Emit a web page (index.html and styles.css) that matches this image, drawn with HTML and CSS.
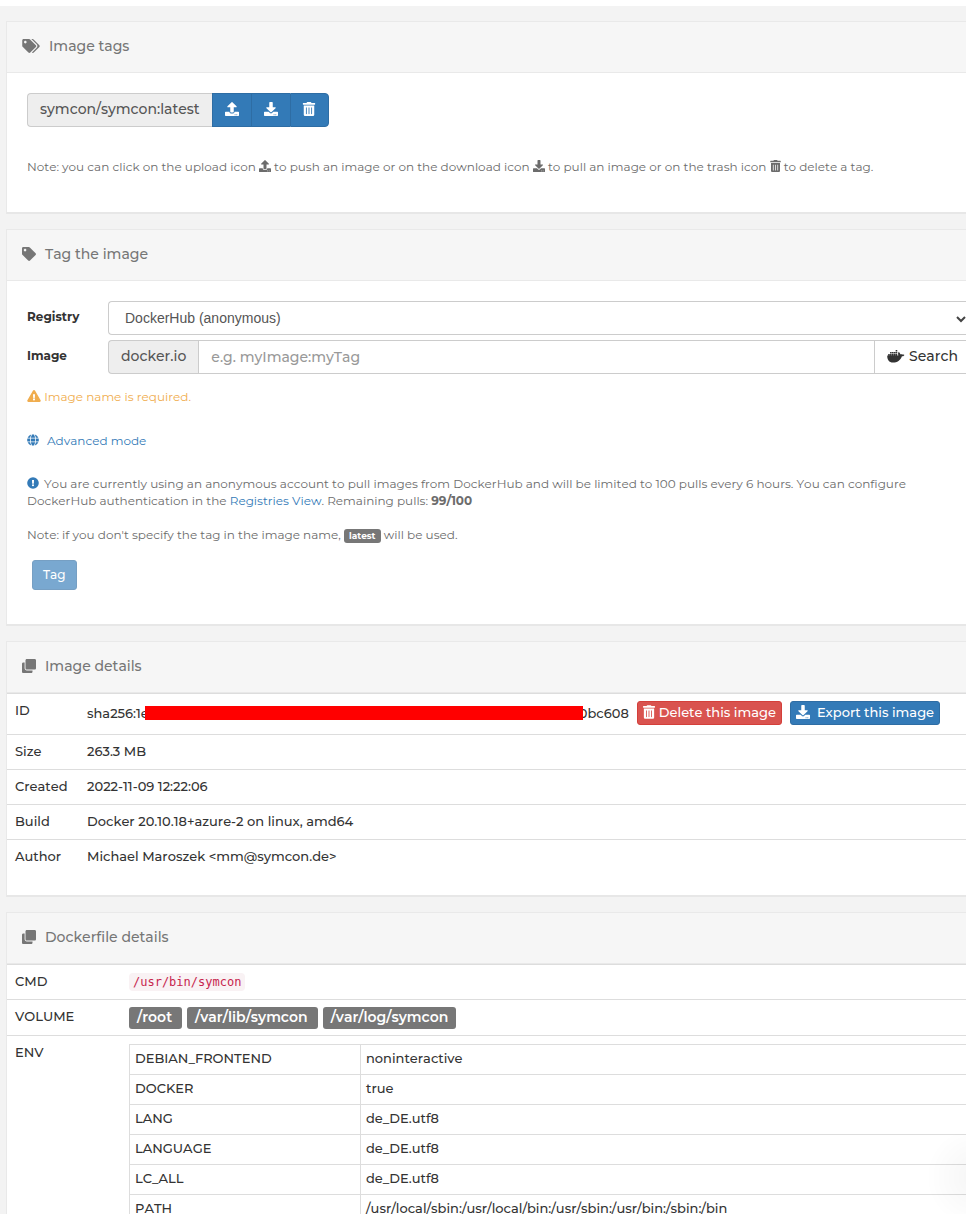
FILE: index.html
```
<!DOCTYPE html>
<html lang="en">
<head>
<meta charset="utf-8">
<meta name="viewport" content="width=device-width, initial-scale=1">
<title>Image details</title>
<link rel="stylesheet" href="styles.css">
</head>
<body>
<svg class="sprite" aria-hidden="true">
  <symbol id="tag" viewBox="0 0 512 512"><path d="M0 252.118V48C0 21.49 21.49 0 48 0h204.118a48 48 0 0 1 33.941 14.059l211.882 211.882c18.745 18.745 18.745 49.137 0 67.882L293.823 497.941c-18.745 18.745-49.137 18.745-67.882 0L14.059 286.059A48 48 0 0 1 0 252.118zM112 64c-26.51 0-48 21.49-48 48s21.49 48 48 48 48-21.49 48-48-21.49-48-48-48z"/></symbol>
  <symbol id="tags" viewBox="0 0 640 512"><path d="M497.941 225.941L286.059 14.059A48 48 0 0 0 252.118 0H48C21.49 0 0 21.49 0 48v204.118a48 48 0 0 0 14.059 33.941l211.882 211.882c18.744 18.745 49.136 18.746 67.882 0l204.118-204.118c18.745-18.745 18.745-49.137 0-67.882zM112 160c-26.51 0-48-21.49-48-48s21.49-48 48-48 48 21.49 48 48-21.49 48-48 48zm513.941 133.823L421.823 497.941c-18.745 18.745-49.137 18.745-67.882 0l-.36-.36L527.64 323.522c16.999-16.999 26.36-39.6 26.36-63.64s-9.362-46.641-26.36-63.64L331.397 0h48.721a48 48 0 0 1 33.941 14.059l211.882 211.882c18.745 18.745 18.745 49.137 0 67.882z"/></symbol>
  <symbol id="upload" viewBox="0 0 512 512"><path d="M296 384h-80c-13.3 0-24-10.7-24-24V192h-87.7c-17.8 0-26.7-21.5-14.1-34.1L242.3 5.7c7.5-7.5 19.8-7.5 27.3 0l152.2 152.2c12.6 12.6 3.7 34.1-14.1 34.1H320v168c0 13.3-10.7 24-24 24zm216-8v112c0 13.3-10.7 24-24 24H24c-13.3 0-24-10.7-24-24V376c0-13.3 10.7-24 24-24h136v8c0 30.9 25.1 56 56 56h80c30.9 0 56-25.1 56-56v-8h136c13.3 0 24 10.7 24 24zm-124 88c0-11-9-20-20-20s-20 9-20 20 9 20 20 20 20-9 20-20zm64 0c0-11-9-20-20-20s-20 9-20 20 9 20 20 20 20-9 20-20z"/></symbol>
  <symbol id="download" viewBox="0 0 512 512"><path d="M216 0h80c13.3 0 24 10.7 24 24v168h87.7c17.8 0 26.7 21.5 14.1 34.1L269.7 378.3c-7.5 7.5-19.8 7.5-27.3 0L90.1 226.1c-12.6-12.6-3.7-34.1 14.1-34.1H192V24c0-13.3 10.7-24 24-24zm296 376v112c0 13.3-10.7 24-24 24H24c-13.3 0-24-10.7-24-24V376c0-13.3 10.7-24 24-24h146.7l49 49c20.1 20.1 52.5 20.1 72.6 0l49-49H488c13.3 0 24 10.7 24 24zm-124 88c0-11-9-20-20-20s-20 9-20 20 9 20 20 20 20-9 20-20zm64 0c0-11-9-20-20-20s-20 9-20 20 9 20 20 20 20-9 20-20z"/></symbol>
  <symbol id="trash" viewBox="0 0 448 512"><path d="M32 464a48 48 0 0 0 48 48h288a48 48 0 0 0 48-48V128H32zm272-256a16 16 0 0 1 32 0v224a16 16 0 0 1-32 0zm-96 0a16 16 0 0 1 32 0v224a16 16 0 0 1-32 0zm-96 0a16 16 0 0 1 32 0v224a16 16 0 0 1-32 0zM432 32H312l-9.4-18.7A24 24 0 0 0 281.1 0H166.8a23.72 23.72 0 0 0-21.4 13.3L136 32H16A16 16 0 0 0 0 48v32a16 16 0 0 0 16 16h416a16 16 0 0 0 16-16V48a16 16 0 0 0-16-16z"/></symbol>
  <symbol id="clone" viewBox="0 0 512 512"><path d="M464 0c26.51 0 48 21.49 48 48v288c0 26.51-21.49 48-48 48H176c-26.51 0-48-21.49-48-48V48c0-26.51 21.49-48 48-48h288M176 416c-44.112 0-80-35.888-80-80V128H48c-26.51 0-48 21.49-48 48v288c0 26.51 21.49 48 48 48h288c26.51 0 48-21.49 48-48v-48H176z"/></symbol>
  <symbol id="warning" viewBox="0 0 576 512"><path fill-rule="evenodd" d="M569.5 440c18.5 32-4.700 72-41.600 72H48c-36.900 0-60-40-41.600-72L246.400 24c18.500-32 64.700-32 83.200 0zM288 354a46 46 0 1 0 0 92 46 46 0 0 0 0-92zm-43.700-165.300 7.400 136c.4 6.400 5.600 11.300 12 11.300h48.500c6.400 0 11.600-5 12-11.300l7.400-136c.4-6.900-5.100-12.700-12-12.700h-63.400c-6.900 0-12.400 5.800-11.900 12.700z"/></symbol>
  <symbol id="alert" viewBox="0 0 512 512"><path fill-rule="evenodd" d="M504 256a248 248 0 1 1-496 0 248 248 0 0 1 496 0zm-248 50a46 46 0 1 0 0 92 46 46 0 0 0 0-92zm-43.700-165.300 7.400 136c.4 6.400 5.600 11.300 12 11.300h48.500c6.400 0 11.600-5 12-11.300l7.400-136c.4-6.900-5.100-12.700-12-12.700h-63.400c-6.800 0-12.300 5.800-11.900 12.700z"/></symbol>
  <symbol id="globe" viewBox="0 0 496 512"><path d="M336.500 160C322 70.700 287.800 8 248 8s-74 62.700-88.500 152h177zM152 256c0 22.200 1.200 43.500 3.300 64h185.300c2.100-20.500 3.300-41.800 3.300-64s-1.200-43.500-3.300-64H155.300c-2.100 20.500-3.300 41.800-3.300 64zm324.700-96c-28.600-67.900-86.500-120.400-158-141.600 24.400 33.800 41.200 84.700 50 141.600h108zM177.200 18.400C105.800 39.600 47.800 92.100 19.300 160h108c8.700-56.900 25.500-107.800 49.900-141.600zM487.400 192H372.700c2.100 21 3.300 42.500 3.300 64s-1.200 43-3.300 64h114.600c5.500-20.500 8.600-41.800 8.600-64s-3.100-43.500-8.500-64zM120 256c0-21.500 1.200-43 3.300-64H8.600C3.200 212.500 0 233.800 0 256s3.200 43.500 8.600 64h114.600c-2-21-3.200-42.500-3.200-64zm39.500 96c14.500 89.300 48.700 152 88.500 152s74-62.700 88.500-152h-177zm159.300 141.600c71.400-21.200 129.400-73.700 158-141.600h-108c-8.800 56.900-25.600 107.800-50 141.600zM19.300 352c28.600 67.900 86.500 120.400 158 141.600-24.400-33.800-41.200-84.700-50-141.600h-108z"/></symbol>
  <symbol id="docker" viewBox="0 0 640 512"><path d="M350 33h66v60h-66zM117 179h66v60h-66zm78 0h66v60h-66zm78 0h66v60h-66zm77 0h66v60h-66zM39 179h66v60H39zm156-73h66v60h-66zm78 0h66v60h-66zm77 0h66v60h-66zM117 106h66v60h-66zM632 202c-19-12-59-17-89-11-4-28-20-53-49-75l-16-11-11 16c-21 33-23 78-4 108-10 6-30 13-56 13H2c-10 57 7 131 50 182 42 49 105 74 187 74 178 0 310-82 371-231 24 0 76 0 103-51-10-8-62-13-81-14z" transform="scale(.88 1)"/></symbol>
</svg>

<main class="page">
  <section class="widget">
    <h2 class="widget-header"><svg class="icon icon-tags"><use href="#tags"/></svg>Image tags</h2>
    <div class="widget-body">
      <div class="group tag-group">
        <span class="addon">symcon/symcon:latest</span>
        <button class="group-btn" type="button" aria-label="Push tag"><svg class="icon icon-lg"><use href="#upload"/></svg></button>
        <button class="group-btn" type="button" aria-label="Pull tag"><svg class="icon icon-lg"><use href="#download"/></svg></button>
        <button class="group-btn" type="button" aria-label="Delete tag"><svg class="icon icon-lg"><use href="#trash"/></svg></button>
      </div>
      <p class="note">Note: you can click on the upload icon <svg class="icon"><use href="#upload"/></svg> to push an image or on the download icon <svg class="icon"><use href="#download"/></svg> to pull an image or on the trash icon <svg class="icon icon-narrow"><use href="#trash"/></svg> to delete a tag.</p>
    </div>
  </section>

  <section class="widget">
    <h2 class="widget-header"><svg class="icon icon-lg"><use href="#tag"/></svg>Tag the image</h2>
    <form class="widget-body form-body">
      <div class="form-row">
        <label for="registry">Registry</label>
        <div class="select-wrap">
          <select id="registry" class="registry"><option>DockerHub (anonymous)</option></select>
          <svg class="chevron" viewBox="0 0 10 8" aria-hidden="true"><path d="M1 2l4 4 4-4"/></svg>
        </div>
      </div>
      <div class="form-row">
        <label for="image">Image</label>
        <div class="group">
          <span class="addon">docker.io</span>
          <input id="image" class="image-input" type="text" placeholder="e.g. myImage:myTag">
          <button class="search" type="button"><svg class="icon icon-docker"><use href="#docker"/></svg>Search</button>
        </div>
      </div>
      <p class="note warning"><svg class="icon icon-warning"><use href="#warning"/></svg> Image name is required.</p>
      <p class="note advanced"><a href="#advanced"><svg class="icon spaced"><use href="#globe"/></svg>Advanced mode</a></p>
      <p class="note"><svg class="icon info"><use href="#alert"/></svg>You are currently using an anonymous account to pull images from DockerHub and will be limited to 100 pulls every 6 hours. You can configure DockerHub authentication in the <a href="#registries">Registries View</a>. Remaining pulls: <b>99/100</b></p>
      <p class="note">Note: if you don't specify the tag in the image name, <span class="label">latest</span> will be used.</p>
      <button class="btn btn-tag" type="submit" disabled>Tag</button>
    </form>
  </section>

  <section class="widget">
    <h2 class="widget-header"><svg class="icon icon-lg"><use href="#clone"/></svg>Image details</h2>
    <table class="details image-details">
      <tbody>
        <tr><th scope="row">ID</th><td>
          <div class="id-line"><span>sha256:1e</span><span class="redacted"></span><span>0bc608</span>
            <button class="btn btn-xs btn-danger" type="button"><svg class="icon icon-trash"><use href="#trash"/></svg>Delete this image</button>
            <button class="btn btn-xs btn-primary" type="button"><svg class="icon icon-lg"><use href="#download"/></svg>Export this image</button>
          </div></td></tr>
        <tr><th scope="row">Size</th><td>263.3 MB</td></tr>
        <tr><th scope="row">Created</th><td>2022-11-09 12:22:06</td></tr>
        <tr><th scope="row">Build</th><td>Docker 20.10.18+azure-2 on linux, amd64</td></tr>
        <tr><th scope="row">Author</th><td>Michael Maroszek &lt;mm@symcon.de&gt;</td></tr>
      </tbody>
    </table>
  </section>

  <section class="widget">
    <h2 class="widget-header"><svg class="icon icon-lg"><use href="#clone"/></svg>Dockerfile details</h2>
    <table class="details dockerfile">
      <tbody>
        <tr><th scope="row">CMD</th><td><code>/usr/bin/symcon</code></td></tr>
        <tr><th scope="row">VOLUME</th><td><div class="volumes"><span>/root</span><span>/var/lib/symcon</span><span>/var/log/symcon</span></div></td></tr>
        <tr><th scope="row">ENV</th><td class="env-cell">
          <table class="env">
            <tbody>
              <tr><td>DEBIAN_FRONTEND</td><td>noninteractive</td></tr>
              <tr><td>DOCKER</td><td>true</td></tr>
              <tr><td>LANG</td><td>de_DE.utf8</td></tr>
              <tr><td>LANGUAGE</td><td>de_DE.utf8</td></tr>
              <tr><td>LC_ALL</td><td>de_DE.utf8</td></tr>
              <tr><td>PATH</td><td>/usr/local/sbin:/usr/local/bin:/usr/sbin:/usr/bin:/sbin:/bin</td></tr>
            </tbody>
          </table></td></tr>
      </tbody>
    </table>
  </section>
</main>
<div class="corner-glow"></div>
</body>
</html>
```
FILE: styles.css
```
* { box-sizing: border-box; }
html { overflow: hidden; }
body {
  margin: 0;
  height: 100vh;
  overflow: hidden;
  background: #f3f3f3;
  border-top: 6px solid #fff;
  color: #333;
  font: 400 13px/18px Montserrat, Inter, sans-serif;
  font-kerning: none;
}
button, input { font-kerning: none; }
.sprite { display: none; }
.page {
  display: flex;
  flex-direction: column;
  gap: 15px;
  padding: 15px 0 0 6px;
}
.widget {
  background: #fff;
  border: 1px solid #e9e9e9;
  border-right: 0;
  border-bottom: 2px solid #e7e7e7;
}
.widget-header {
  display: flex;
  align-items: center;
  gap: 9px;
  height: 51px;
  margin: 0;
  padding: 0 15px 2px;
  background: #f6f6f6;
  border-bottom: 1px solid #e9e9e9;
  color: #767676;
  font-size: 14px;
  font-weight: 500;
}
.icon {
  width: 12px;
  height: 12px;
  fill: currentColor;
  vertical-align: -1px;
}
.icon-lg { width: 14px; height: 14px; }
.icon-tags { width: 18px; height: 14px; }
.icon-narrow { width: 11px; }
.icon-trash { width: 12px; height: 14px; }
.icon-warning { width: 14px; }
.icon-docker { width: 18px; height: 14px; }

.widget-body { padding: 20px; }
.group { display: flex; height: 34px; }
.tag-group { margin-bottom: 31px; }
.addon {
  display: flex;
  align-items: center;
  padding: 0 12px 2px;
  background: #eee;
  border: 1px solid #ccc;
  border-right: 0;
  border-radius: 4px 0 0 4px;
  color: #555;
  font-size: 14px;
  font-weight: 500;
}
.group-btn {
  display: flex;
  align-items: center;
  justify-content: center;
  width: 39px;
  padding: 0 0 2px;
  background: #337ab7;
  border: 1px solid #2e6da4;
  border-right: 0;
  color: #fff;
}
.group-btn:last-child { border-right: 1px solid #2e6da4; border-radius: 0 4px 4px 0; }
.note {
  margin: 0 0 17px;
  color: #6c6c6c;
  font-size: 12px;
  line-height: 17px;
}
a { color: #337ab7; text-decoration: none; }

.form-body { padding-right: 0; padding-bottom: 34px; }
.form-row {
  display: grid;
  grid-template-columns: 81px 1fr;
  margin-bottom: 5px;
}
.form-row label { padding-top: 7px; font-size: 12px; font-weight: 700; }
.select-wrap { position: relative; }
.registry {
  width: 100%;
  height: 34px;
  padding: 0 16px;
  appearance: none;
  background: #fff;
  border: 1px solid #ccc;
  border-right: 0;
  border-radius: 4px 0 0 4px;
  color: #555;
  font: 14px "Liberation Sans", sans-serif;
}
.chevron {
  position: absolute;
  top: 14px;
  right: 0;
  width: 10px;
  height: 8px;
  fill: none;
  stroke: #444;
  stroke-width: 2;
}
.image-input {
  flex: 1;
  min-width: 0;
  padding: 0 12px;
  border: 1px solid #ccc;
  border-right: 0;
  background: #fff;
  font-family: Montserrat, Inter, sans-serif;
  font-size: 14px;
  font-weight: 500;
}
.image-input::placeholder { color: #999; opacity: 1; }
.search {
  display: flex;
  align-items: center;
  gap: 4px;
  padding: 0 8px 2px 12px;
  background: #fff;
  border: 1px solid #ccc;
  border-right: 0;
  color: #333;
  font-family: Montserrat, Inter, sans-serif;
  font-size: 14px;
  font-weight: 500;
}
.warning { margin: 14px 0 27px; color: #f0ad4e; }
.advanced { margin-bottom: 26px; }
.spaced { margin-right: 8px; }
.info { margin-right: 5px; color: #337ab7; }
.label {
  display: inline-block;
  padding: 0 5px;
  background: #777;
  border-radius: 3px;
  color: #fff;
  font-size: 9px;
  font-weight: 700;
  line-height: 14px;
}
.btn {
  border: 1px solid #2e6da4;
  border-radius: 3px;
  background: #337ab7;
  color: #fff;
  font-family: Montserrat, Inter, sans-serif;
  font-size: 12px;
  font-weight: 500;
  line-height: 18px;
}
.btn-tag { margin-left: 5px; padding: 5px 10px; opacity: .65; }

.details { width: 100%; border-collapse: collapse; }
.details th, .details td {
  padding: 7px 8px 9px;
  border-top: 1px solid #ddd;
  font-weight: 500;
  text-align: left;
  vertical-align: top;
}
.details th { width: 72px; }
.image-details { margin-bottom: 21px; }
.id-line { display: flex; align-items: center; height: 24px; }
.redacted {
  position: relative;
  flex: none;
  width: 438px;
  height: 14px;
  margin: 0 -4px;
  background: #f00;
}
.btn-xs {
  display: flex;
  align-items: center;
  gap: 4px;
  height: 24px;
  margin-left: 8px;
  padding: 0 5px 2px;
  font-size: 13px;
  white-space: nowrap;
}
.btn-danger { background: #d9534f; border-color: #d43f3a; }
.btn-primary { gap: 7px; }
.details.dockerfile th { width: 114px; }
code {
  padding: 2px 4px;
  background: #f9f2f4;
  border-radius: 4px;
  color: #c7254e;
  font: 12px/15px "DejaVu Sans Mono", monospace;
}
.volumes { display: flex; gap: 5px; height: 19px; }
.volumes span {
  height: 22px;
  padding: 0 10px 0 8px;
  background: #777;
  border-radius: 3px;
  color: #fff;
  font-size: 14px;
  font-weight: 600;
  line-height: 21px;
}
.volumes span:last-child { padding-right: 8px; }
.details .env-cell { padding: 8px 0 8px 8px; }
.env { width: 100%; border-collapse: collapse; }
.details .env td {
  padding: 4px 5px 6px;
  border: 1px solid #ddd;
  border-right: 0;
  line-height: 19px;
}
.env td:first-child { width: 231px; }
.corner-glow {
  position: fixed;
  right: 0;
  bottom: 0;
  width: 44px;
  height: 80px;
  background: radial-gradient(circle at 54px 43px, rgba(0, 0, 0, .04), rgba(0, 0, 0, 0) 50px);
  pointer-events: none;
}
```
